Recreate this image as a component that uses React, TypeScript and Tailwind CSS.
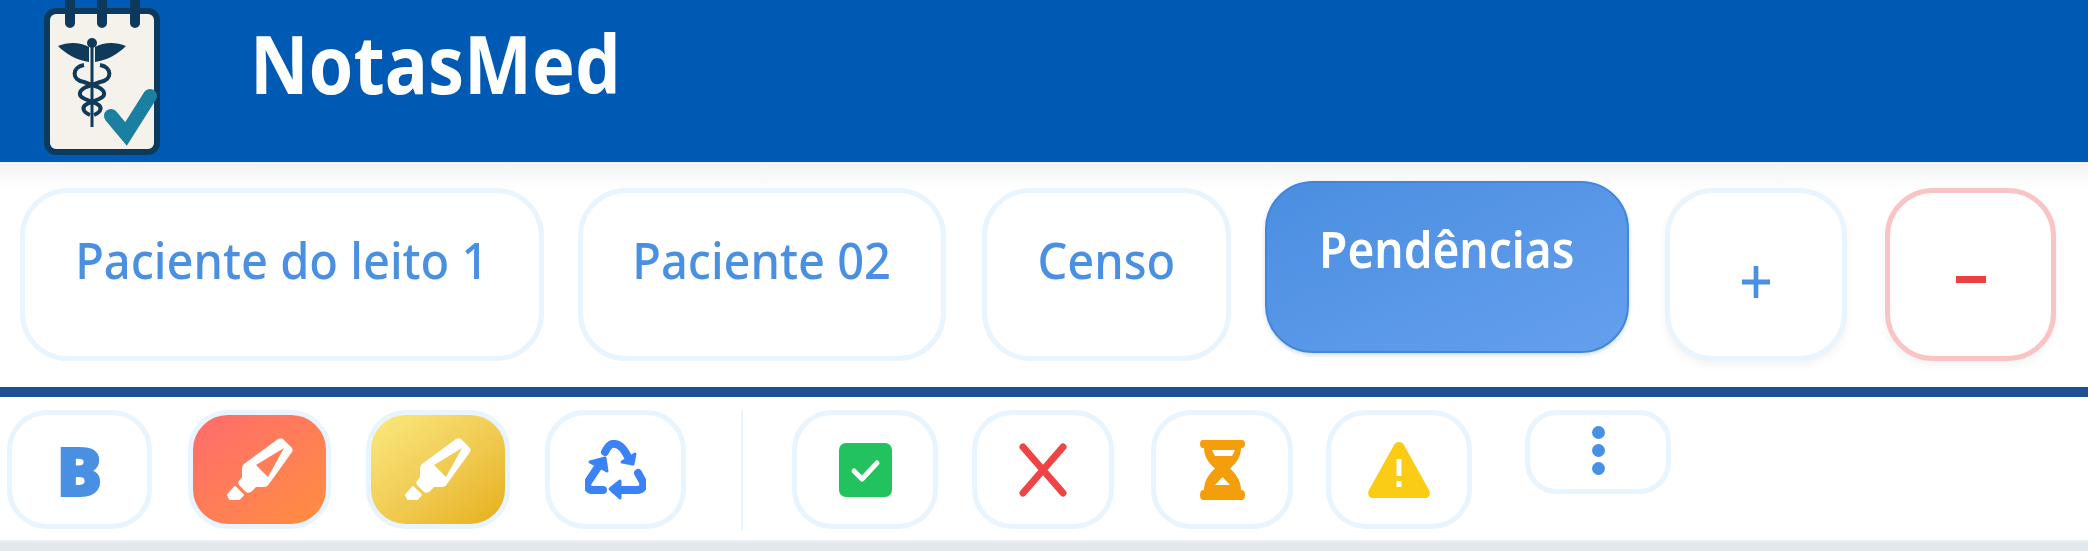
import type { ReactNode } from "react";

const font = "font-['Noto_Sans','Open_Sans',sans-serif]";

function Logo() {
  return (
    <svg viewBox="0 0 120 160" className="h-[160px] w-[120px] shrink-0">
      <rect x="5" y="11" width="110" height="141" rx="9" fill="#f5f2ec" stroke="#0c3a5c" strokeWidth="6" />
      <path d="M28 0v23M60 0v23M93 0v23" stroke="#0c3a5c" strokeWidth="10" strokeLinecap="round" />
      <circle cx="50" cy="43" r="5" fill="#0f3a5a" />
      <path d="M16 46C26 42 38 42 47 47V62C34 60 24 54 16 46ZM84 46C74 42 62 42 53 47V62C66 60 76 54 84 46Z" fill="#0f3a5a" />
      <g fill="none" stroke="#0f3a5a">
        <path d="M50 44V127" strokeWidth="3" />
        <path d="M42 65c-12 2-13 15 0 17l14 5c8 4 8 9 1 12l-12 5c-6 3-4 8 3 11" strokeWidth="4" />
        <path d="M58 65c12 2 13 15 0 17l-14 5c-8 4-8 9-1 12l12 5c6 3 4 8-3 11" strokeWidth="4" />
      </g>
      <path d="M69 116l15 18 24-38" fill="none" stroke="#1b7f9f" strokeWidth="14" strokeLinejoin="miter" strokeLinecap="round" />
    </svg>
  );
}

function Tab({ className, children }: { className: string; children: ReactNode }) {
  return (
    <button
      className={`flex h-[173px] shrink-0 justify-center rounded-[48px] border-[5px] border-[#e8f4fe] bg-white pt-[33px] text-[50px] leading-[68px] font-medium text-[#4a90e2] ${className}`}
    >
      <span className="scale-x-[0.94] whitespace-nowrap">{children}</span>
    </button>
  );
}

function Tool({ className, children }: { className: string; children: ReactNode }) {
  return (
    <button
      className={`flex shrink-0 items-center justify-center rounded-[40px] border-[5px] border-[#e8f4fe] bg-white ${className}`}
    >
      {children}
    </button>
  );
}

function Marker() {
  return (
    <svg viewBox="0 0 66 63" className="h-[63px] w-[66px]">
      <path
        fillRule="evenodd"
        fill="#fff"
        d="M51 1C53 0 55 0 56 1L64 9C66 11 66 13 65 14L42 46C41 48 39 49 37 49H29L24 54C22 55 20 55 19 54L12 47C11 45 11 44 12 43L15 39V31C15 29 16 27 17 26ZM57 10 29 27 41 39Z"
      />
      <path fill="#fff" stroke="#fff" strokeWidth="2" strokeLinejoin="round" d="M1 57 8 49 16 57 12 61H3Z" />
    </svg>
  );
}

function Recycle() {
  return (
    <svg viewBox="0 0 61 60" className="h-[60px] w-[61px]" fill="none" stroke="#3b82f6" strokeWidth="8" strokeLinecap="round" strokeLinejoin="round">
      <path d="M20 12C23 6 26 3 30 4C35 4 39 9 43 17" />
      <path d="M50 14 48 24 37 22Z" fill="#3b82f6" strokeWidth="3" />
      <path d="M13 27 3 42C1 46 3 50 8 50H18" />
      <path d="M5 22 20 18 22 31Z" fill="#3b82f6" strokeWidth="3" />
      <path d="M53 33 58 42C59 47 57 50 52 50H30" />
      <path d="M25 49 35 41V58Z" fill="#3b82f6" strokeWidth="3" />
    </svg>
  );
}

export default function App() {
  return (
    <div className={`flex h-[551px] w-[2088px] flex-col overflow-hidden bg-white blur-[0.7px] ${font}`}>
      <header className="flex h-[162px] shrink-0 items-start bg-[#005ab4] pl-[42px]">
        <Logo />
        <h1 className="mt-[15px] ml-[88px] origin-left scale-x-[0.9] text-[80px] leading-[96px] font-bold text-white">NotasMed</h1>
      </header>

      <nav className="flex h-[225px] shrink-0 items-start bg-gradient-to-b from-[#f1f2f2] to-white to-[12%] pt-[26px] pl-[20px]">
        <Tab className="w-[524px]">Paciente do leito 1</Tab>
        <Tab className="ml-[34px] w-[368px]">Paciente 02</Tab>
        <Tab className="ml-[36px] w-[249px]">Censo</Tab>
        <button className="ml-[34px] flex h-[172px] w-[364px] shrink-0 -translate-y-[7px] justify-center rounded-[48px] border-2 border-[#4385d8] bg-gradient-to-br from-[#4a8ee0] to-[#659fee] pt-[32px] text-[50px] leading-[68px] font-semibold text-white shadow-[0_2px_4px_rgba(74,144,226,0.3)]">
          <span className="scale-x-[0.92] whitespace-nowrap">Pendências</span>
        </button>
        <Tab className="ml-[36px] w-[182px] shadow-[0_4px_8px_rgba(0,0,0,0.05)]">
          <svg viewBox="0 0 30 32" className="mt-[40px] h-[32px] w-[30px]">
            <path d="M15 0v32M0 16h30" stroke="#4a90e2" strokeWidth="5" />
          </svg>
        </Tab>
        <button className="ml-[38px] flex h-[173px] w-[171px] shrink-0 items-center justify-center rounded-[48px] border-[5px] border-[#fac4c4] bg-white shadow-[0_4px_8px_rgba(0,0,0,0.05)]">
          <span className="mt-[10px] h-[7px] w-[30px] bg-[#ea4040]" />
        </button>
      </nav>

      <div className="h-[10px] shrink-0 bg-[#1f5096]" />

      <div className="flex h-[143px] shrink-0 items-start pt-[13px] pl-[7px]">
        <Tool className="h-[119px] w-[145px]">
          <span className="text-[68px] leading-none font-black text-[#4a90e2] [-webkit-text-stroke:2px_#4a90e2]">B</span>
        </Tool>
        <Tool className="ml-[36px] h-[119px] w-[143px] !bg-gradient-to-br from-[#ff6b6b] to-[#ff8e3c]">
          <Marker />
        </Tool>
        <Tool className="ml-[35px] h-[119px] w-[144px] !bg-gradient-to-br from-[#fbe97f] to-[#e6b00e]">
          <Marker />
        </Tool>
        <Tool className="ml-[35px] h-[119px] w-[141px]">
          <Recycle />
        </Tool>
        <div className="ml-[55px] h-[120px] w-[2px] shrink-0 bg-[#e8f4fe]" />
        <Tool className="ml-[49px] h-[119px] w-[146px]">
          <svg viewBox="0 0 53 54" className="h-[54px] w-[53px]">
            <rect width="53" height="54" rx="7" fill="#22c35e" />
            <path d="M15 28l8 8 15-16" fill="none" stroke="#fff" strokeWidth="5" strokeLinecap="round" strokeLinejoin="round" />
          </svg>
        </Tool>
        <Tool className="ml-[34px] h-[119px] w-[142px]">
          <svg viewBox="0 0 48 54" className="h-[54px] w-[48px]">
            <path d="M4 4l40 46M44 4L4 50" stroke="#ef4444" strokeWidth="7" strokeLinecap="round" />
          </svg>
        </Tool>
        <Tool className="ml-[37px] h-[119px] w-[142px]">
          <svg viewBox="0 0 45 60" className="h-[60px] w-[45px]">
            <path
              fillRule="evenodd"
              fill="#f59e0b"
              d="M3 0H42C46 0 46 8 42 8H41C41 18 35 24 30 28.5C35 33 41 40 41 50H42C46 50 46 60 42 60H3C-1 60-1 50 3 50H4C4 40 10 33 15 28.5C10 24 4 18 4 8H3C-1 8-1 0 3 0ZM12 10 15 16H32L35 10ZM22.500 37 15 45H30Z"
            />
          </svg>
        </Tool>
        <Tool className="ml-[33px] h-[119px] w-[146px]">
          <svg viewBox="0 0 62 56" className="h-[56px] w-[62px]">
            <path
              fillRule="evenodd"
              fill="#facc15"
              d="M31 0C33 0 35 1 36 3L61 48C63 52 61 56 57 56H5C1 56-1 52 1 48L26 3C27 1 29 0 31 0ZM28.500 17V34H33.500V17ZM28.500 39V45H33.500V39Z"
            />
          </svg>
        </Tool>
        <button className="ml-[53px] flex h-[84px] w-[146px] shrink-0 flex-col items-center gap-[5px] rounded-[32px] border-[5px] border-[#e8f4fe] bg-white pt-[11px]">
          <span className="h-[13px] w-[13px] rounded-full bg-[#4a90e2]" />
          <span className="h-[13px] w-[13px] rounded-full bg-[#4a90e2]" />
          <span className="h-[13px] w-[13px] rounded-full bg-[#4a90e2]" />
        </button>
      </div>

      <div className="grow bg-gradient-to-b from-[#eef3f7] to-[#e3e8ed] to-[30%]" />
    </div>
  );
}
